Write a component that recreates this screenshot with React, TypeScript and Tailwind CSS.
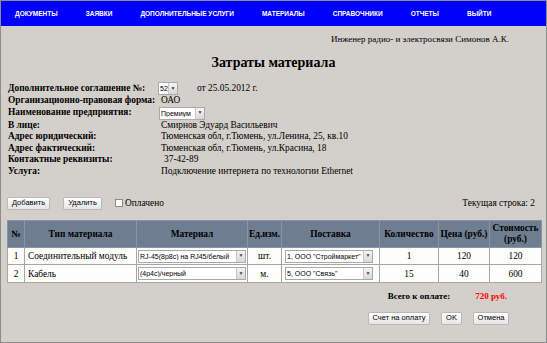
import React from "react"

const nav = ["ДОКУМЕНТЫ", "ЗАЯВКИ", "ДОПОЛНИТЕЛЬНЫЕ УСЛУГИ", "МАТЕРИАЛЫ", "СПРАВОЧНИКИ", "ОТЧЕТЫ", "ВЫЙТИ"]

function Select({ value, w }: { value: string; w: string }) {
  return (
    <div className={`${w} shrink-0 h-[13px] bg-white border border-[#a9a9a9] flex items-center font-['Liberation_Sans',sans-serif] text-[7px] text-black overflow-hidden`}>
      <span className="flex-1 pl-[1px] whitespace-nowrap overflow-hidden leading-none">{value}</span>
      <span className="w-[9px] shrink-0 h-full bg-gradient-to-b from-[#f4f4f4] to-[#d8d8d8] border-l border-[#c8c8c8] flex items-center justify-center text-[5px] text-[#444]">▼</span>
    </div>
  )
}

function Btn({ children, w = "" }: { children: React.ReactNode; w?: string }) {
  return (
    <div className={`${w} h-[13px] px-[4px] bg-gradient-to-b from-white to-[#e6e6e6] border border-[#b8b8b8] rounded-[2px] flex items-center justify-center font-['Liberation_Sans',sans-serif] text-[7.5px] text-black leading-none whitespace-nowrap`}>
      {children}
    </div>
  )
}

const info: [string, React.ReactNode][] = [
  ["Организационно-правовая форма:", <span className="pl-[2px]">ОАО</span>],
  ["Наименование предприятия:", <Select value="Премиум" w="w-[46px]" />],
  ["В лице:", <span className="pl-[2px]">Смирнов Эдуард Васильевич</span>],
  ["Адрес юридический:", <span className="pl-[2px]">Тюменская обл, г.Тюмень, ул.Ленина, 25, кв.10</span>],
  ["Адрес фактический:", <span className="pl-[2px]">Тюменская обл, г.Тюмень, ул.Красина, 18</span>],
  ["Контактные реквизиты:", <span className="pl-[5px]">37-42-89</span>],
  ["Услуга:", <span className="pl-[2px]">Подключение интернета по технологии Ethernet</span>],
]

const td = "border border-[#a6a6a6] text-center"

export default function App() {
  return (
    <div className="w-[547px] h-[343px] bg-[#d3cfca] border border-[#8c8c8c] font-['Liberation_Serif',serif] text-black overflow-hidden">
      {/* Menu */}
      <div className="h-[25px] bg-[#0000ff] flex items-center pl-[14px] gap-[28px] font-['Liberation_Sans',sans-serif] text-[6.5px] font-bold text-white whitespace-nowrap">
        {nav.map((n) => (
          <span key={n}>{n}</span>
        ))}
      </div>

      <div className="flex justify-end pr-[37px] pt-[8px] text-[9px] leading-[11px]">
        Инженер радио- и электросвязи Симонов А.К.
      </div>

      <h1 className="text-center text-[14px] font-bold leading-[16px] mt-[10px]">Затраты материала</h1>

      {/* Details */}
      <div className="mt-[11px] pl-[7px] text-[9.4px] leading-[11.5px] whitespace-nowrap">
        <div className="flex items-center h-[13px]">
          <span className="w-[150px] shrink-0 font-bold">Дополнительное соглашение №:</span>
          <Select value="52" w="w-[20px]" />
          <span className="ml-[19px]">от 25.05.2012 г.</span>
        </div>
        {info.map(([l, v]) => (
          <div key={l} className={`flex items-center ${l.startsWith("Наим") ? "h-[13px]" : "h-[11.5px]"}`}>
            <span className="w-[151px] shrink-0 font-bold">{l}</span>
            {v}
          </div>
        ))}
      </div>

      {/* Toolbar */}
      <div className="mt-[19px] px-[6px] flex items-center text-[9.4px]">
        <Btn w="w-[43px]">Добавить</Btn>
        <div className="ml-[13px]"><Btn w="w-[39px]">Удалить</Btn></div>
        <div className="ml-[13px] w-[8px] h-[8px] bg-white border border-[#8a8a8a]" />
        <span className="ml-[2px]">Оплачено</span>
        <span className="ml-auto pr-[5px]">Текущая строка: 2</span>
      </div>

      {/* Table */}
      <table className="mt-[10px] ml-[6px] w-[534px] border-collapse border border-[#a6a6a6] text-[9.4px] table-fixed">
        <colgroup>
          <col className="w-[17px]" />
          <col className="w-[112px]" />
          <col className="w-[111px]" />
          <col className="w-[34px]" />
          <col className="w-[98px]" />
          <col className="w-[59px]" />
          <col className="w-[51px]" />
          <col className="w-[52px]" />
        </colgroup>
        <thead>
          <tr className="bg-[#6f7d91] h-[27px] font-bold">
            {["№", "Тип материала", "Материал", "Ед.изм.", "Поставка", "Количество", "Цена (руб.)"].map((h) => (
              <th key={h} className="border border-[#8a95a4] px-0 text-center whitespace-nowrap">{h}</th>
            ))}
            <th className="border border-[#8a95a4] leading-[11px]">Стоимость<br />(руб.)</th>
          </tr>
        </thead>
        <tbody className="bg-[#fdfdfa]">
          <tr className="h-[17px]">
            <td className={td}>1</td>
            <td className="border border-[#a6a6a6] pl-[3px] whitespace-nowrap">Соединительный модуль</td>
            <td className="border border-[#a6a6a6] px-[1px]"><Select value="RJ-45(8p8c) на RJ45/белый" w="w-[108px]" /></td>
            <td className={td}>шт.</td>
            <td className="border border-[#a6a6a6] px-[3px]"><Select value='1, ООО "Строймаркет"' w="w-[88px]" /></td>
            <td className={td}>1</td>
            <td className={td}>120</td>
            <td className={td}>120</td>
          </tr>
          <tr className="h-[18px]">
            <td className={td}>2</td>
            <td className="border border-[#a6a6a6] pl-[3px]">Кабель</td>
            <td className="border border-[#a6a6a6] px-[1px]"><Select value="(4p4c)/черный" w="w-[108px]" /></td>
            <td className={td}>м.</td>
            <td className="border border-[#a6a6a6] px-[3px]"><Select value='5, ООО "Связь"' w="w-[88px]" /></td>
            <td className={td}>15</td>
            <td className={td}>40</td>
            <td className={td}>600</td>
          </tr>
        </tbody>
      </table>

      {/* Total */}
      <div className="mt-[7px] flex justify-end items-center pr-[39px] text-[9px] font-bold">
        <span>Всего к оплате:</span>
        <span className="ml-[25px] text-[#ff0000]">720 руб.</span>
      </div>

      <div className="mt-[8px] flex justify-end gap-[11px] pr-[37px]">
        <Btn w="w-[62px]">Счет на оплату</Btn>
        <Btn w="w-[21px]">OK</Btn>
        <Btn w="w-[36px]">Отмена</Btn>
      </div>
    </div>
  )
}
